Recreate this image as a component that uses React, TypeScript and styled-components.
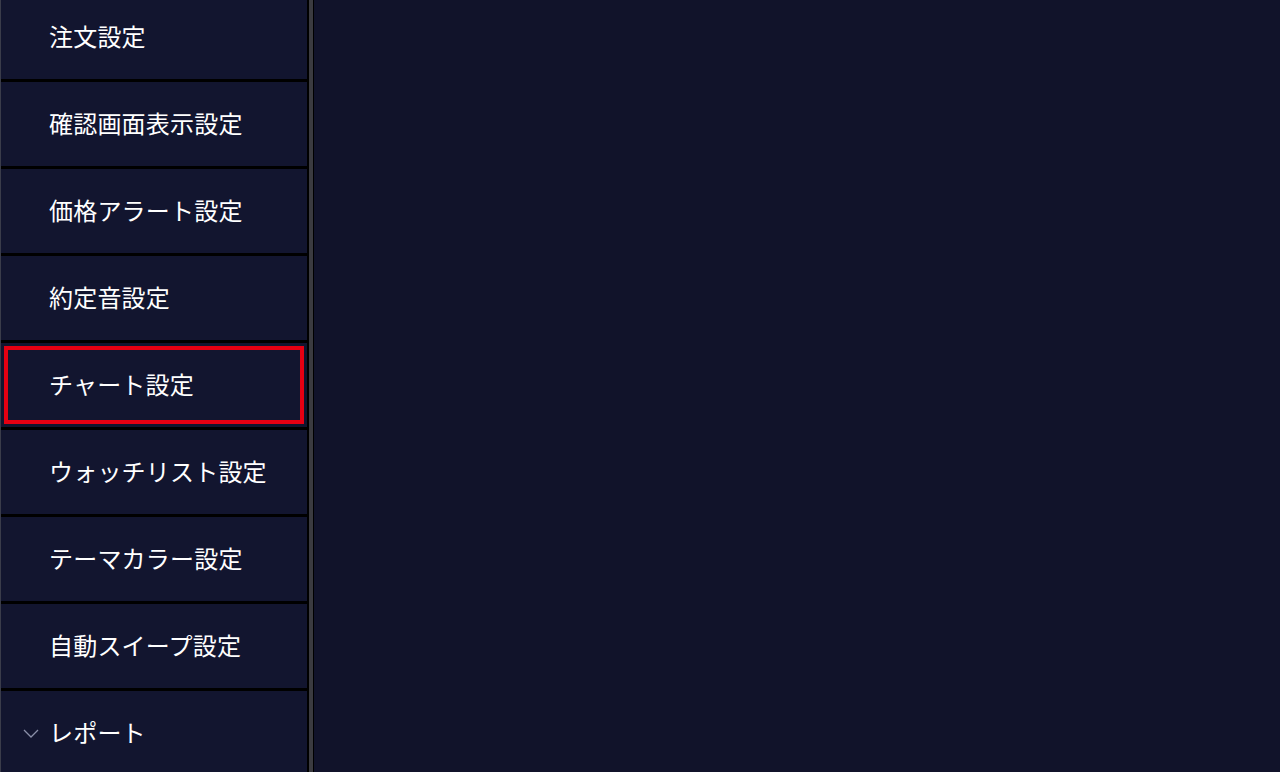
import styled, { createGlobalStyle } from 'styled-components';

const GlobalStyle = createGlobalStyle`
  html, body {
    margin: 0;
    padding: 0;
    height: 100%;
    background: #11132a;
    font-family: "Noto Sans CJK JP", "Noto Sans", sans-serif;
    overflow: hidden;
  }
  #root {
    height: 100%;
  }
`;

const items = [
  '注文設定',
  '確認画面表示設定',
  '価格アラート設定',
  '約定音設定',
  'チャート設定',
  'ウォッチリスト設定',
  'テーマカラー設定',
  '自動スイープ設定'
];

function App() {
  return (
    <>
      <GlobalStyle />
      <Layout>
        <Sidebar>
          <List>
            {items.map((label) => (
              <Row key={label} $active={label === 'チャート設定'}>
                <Label>{label}</Label>
              </Row>
            ))}
            <Row>
              <Chevron viewBox="0 0 16 9">
                <path d="M1 1 L8 8 L15 1" fill="none" stroke="#8a8fa8" strokeWidth="1.3" />
              </Chevron>
              <Label>レポート</Label>
            </Row>
          </List>
        </Sidebar>
        <Splitter />
        <Main />
      </Layout>
    </>
  );
}

export default App;

const Layout = styled.div`
  display: flex;
  height: 100vh;
  width: 100vw;
`;

const Sidebar = styled.div`
  width: 307px;
  flex-shrink: 0;
  overflow: hidden;
  background: #000;
  border-left: 1px solid #3a3c4a;
  box-sizing: border-box;
`;

const List = styled.div`
  display: flex;
  flex-direction: column;
  gap: 3px;
  margin-top: -5px;
`;

const Row = styled.div<{ $active?: boolean }>`
  height: 84px;
  flex-shrink: 0;
  display: flex;
  align-items: center;
  padding-left: 48px;
  padding-bottom: 3px;
  background: #12152f;
  box-sizing: border-box;
  position: relative;
  outline: ${(p) => (p.$active ? '4px solid #e60012' : 'none')};
  outline-offset: -7px;
`;

const Label = styled.span`
  color: #ffffff;
  font-size: 24px;
  letter-spacing: 0.2px;
  white-space: nowrap;
`;

const Chevron = styled.svg`
  position: absolute;
  left: 22px;
  top: 50%;
  width: 16px;
  height: 9px;
  margin-top: -4px;
`;

const Splitter = styled.div`
  width: 7px;
  flex-shrink: 0;
  background: #000;
  border-left: 2px solid #000;
  box-sizing: border-box;
  display: flex;
  &::before {
    content: '';
    width: 4px;
    background: #3b3b40;
  }
`;

const Main = styled.div`
  flex: 1;
  background: #11132a;
`;
